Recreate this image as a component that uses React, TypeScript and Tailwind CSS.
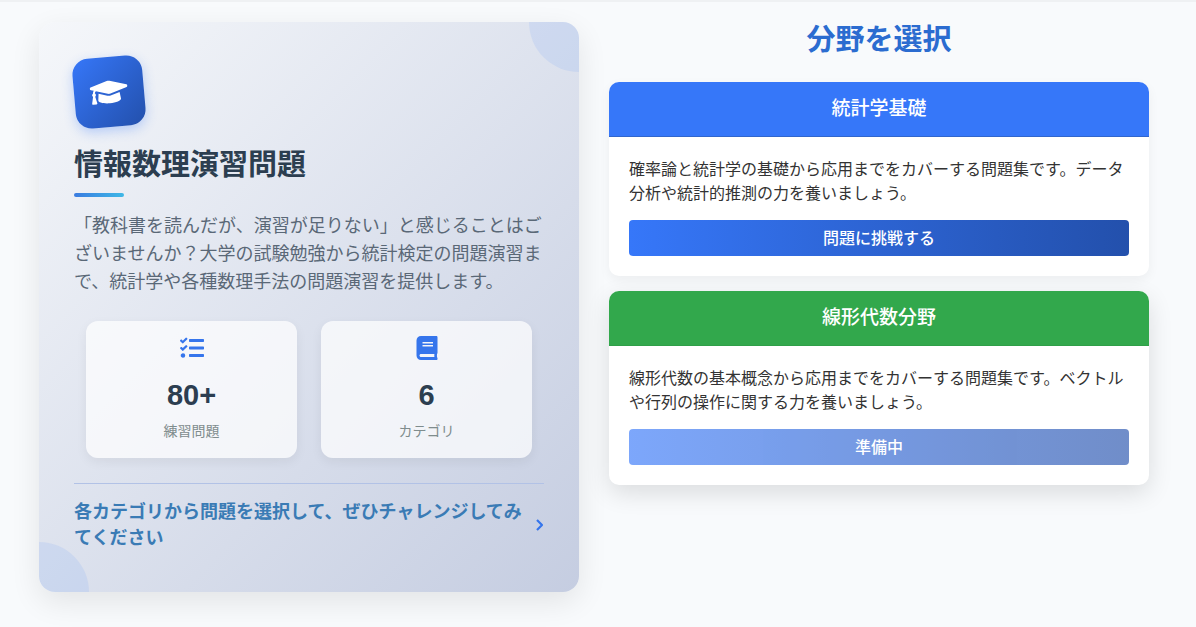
import { type ReactNode } from "react";
import { FaBook, FaGraduationCap, FaTasks } from "react-icons/fa";

type Category = {
  title: string;
  description: string;
  button: string;
  ready: boolean;
  headerClass: string;
  shadowClass: string;
};

const categories: Category[] = [
  {
    title: "統計学基礎",
    description:
      "確率論と統計学の基礎から応用までをカバーする問題集です。データ分析や統計的推測の力を養いましょう。",
    button: "問題に挑戦する",
    ready: true,
    headerClass: "bg-[#3677f9] border-[#3166cc]",
    shadowClass: "shadow-[0_4px_12px_rgba(0,0,0,0.05)]",
  },
  {
    title: "線形代数分野",
    description:
      "線形代数の基本概念から応用までをカバーする問題集です。ベクトルや行列の操作に関する力を養いましょう。",
    button: "準備中",
    ready: false,
    headerClass: "bg-[#32a84c] border-[#2f9f48]",
    shadowClass: "shadow-[0_8px_24px_rgba(0,0,0,0.12)]",
  },
];

const ChevronIcon = () => (
  <svg
    viewBox="0 0 9 12"
    className="h-3 w-[9px] shrink-0 text-[#3575ec]"
    fill="none"
    stroke="currentColor"
    strokeWidth="2.2"
    strokeLinejoin="round"
    aria-hidden="true"
  >
    <path d="M2 1l5 5-5 5" />
  </svg>
);

const Stat = ({
  icon,
  value,
  label,
}: {
  icon: ReactNode;
  value: string;
  label: string;
}) => (
  <div className="flex flex-1 flex-col items-center rounded-xl bg-white/70 pb-4 pt-[15px] shadow-[0_4px_12px_rgba(0,0,0,0.06)]">
    <div className="text-2xl text-[#3575ec]">{icon}</div>
    <p className="mt-[18px] text-[29px] font-bold leading-[35px] text-[#2c3e50]">
      {value}
    </p>
    <p className="mt-2 text-sm leading-[21px] text-[#7f8c8d]">{label}</p>
  </div>
);

const IntroCard = () => (
  <section className="relative flex-1 overflow-hidden rounded-2xl bg-linear-135 from-[#f5f7fa] to-[#c5cde1] px-[35px] pb-[41px] pt-[35px]">
    <div className="absolute -right-[50px] -top-[50px] h-[100px] w-[100px] rounded-full bg-[#3a7bfd]/10" />
    <div className="absolute -bottom-[50px] -left-[50px] h-[100px] w-[100px] rounded-full bg-[#3a7bfd]/10" />

    <div className="flex h-[70px] w-[70px] -rotate-5 items-center justify-center rounded-2xl bg-linear-135 from-[#3677f9] to-[#2350ac] text-[38px] text-white shadow-[0_4px_12px_rgba(54,119,249,0.3)]">
      <FaGraduationCap />
    </div>
    <h1 className="mt-[21px] text-[29px] font-bold leading-[35px] text-[#2c3e50]">
      情報数理演習問題
    </h1>
    <div className="mt-2.5 h-1 w-[50px] rounded-sm bg-linear-to-r from-[#3a7be0] to-[#3fb8e6]" />
    <p className="mt-[15px] text-lg leading-7 text-[#5a6877]">
      「教科書を読んだが、演習が足りない」と感じることはございませんか？大学の試験勉強から統計検定の問題演習まで、統計学や各種数理手法の問題演習を提供します。
    </p>

    <div className="mt-[25px] flex gap-6 px-3">
      <Stat icon={<FaTasks />} value="80+" label="練習問題" />
      <Stat icon={<FaBook />} value="6" label="カテゴリ" />
    </div>

    <div className="mt-[25px] flex items-center justify-between gap-2 border-t border-[#b2c2e6] pt-[15px]">
      <p className="text-lg font-bold leading-[26px] text-[#3a7bb5]">
        各カテゴリから問題を選択して、ぜひチャレンジしてみてください
      </p>
      <ChevronIcon />
    </div>
  </section>
);

const CategoryCard = ({ category }: { category: Category }) => (
  <article
    className={`overflow-hidden rounded-[10px] bg-white ${category.shadowClass}`}
  >
    <h3
      className={`border-b py-3.5 text-center text-[19px] font-medium leading-[26px] text-white ${category.headerClass}`}
    >
      {category.title}
    </h3>
    <div className="px-5 pb-5 pt-[21px]">
      <p className="leading-6 text-[#333333]">{category.description}</p>
      <button
        type="button"
        disabled={!category.ready}
        className="mt-3.5 block h-9 w-full rounded bg-linear-to-r from-[#3677f9] to-[#2350ac] pt-0.5 font-medium leading-6 text-white disabled:opacity-65"
      >
        {category.button}
      </button>
    </div>
  </article>
);

const App = () => {
  return (
    <main
      lang="ja"
      className="min-h-screen border-t-2 border-[#eff1f3] bg-[#f8fafc] pb-9 pr-2 pt-5 font-['Liberation_Sans','Noto_Sans_CJK_JP',sans-serif]"
    >
      <div className="mx-auto flex max-w-[1110px] items-start gap-[30px]">
        <div className="flex flex-1 rounded-2xl shadow-[0_10px_30px_rgba(0,0,0,0.09)]">
          <IntroCard />
        </div>
        <section className="flex-1">
          <h2 className="pt-px text-center text-[29px] font-bold leading-[35px] text-[#2b6cd0]">
            分野を選択
          </h2>
          <div className="mt-6 flex flex-col gap-[15px]">
            {categories.map((category) => (
              <CategoryCard key={category.title} category={category} />
            ))}
          </div>
        </section>
      </div>
    </main>
  );
};

export default App;
